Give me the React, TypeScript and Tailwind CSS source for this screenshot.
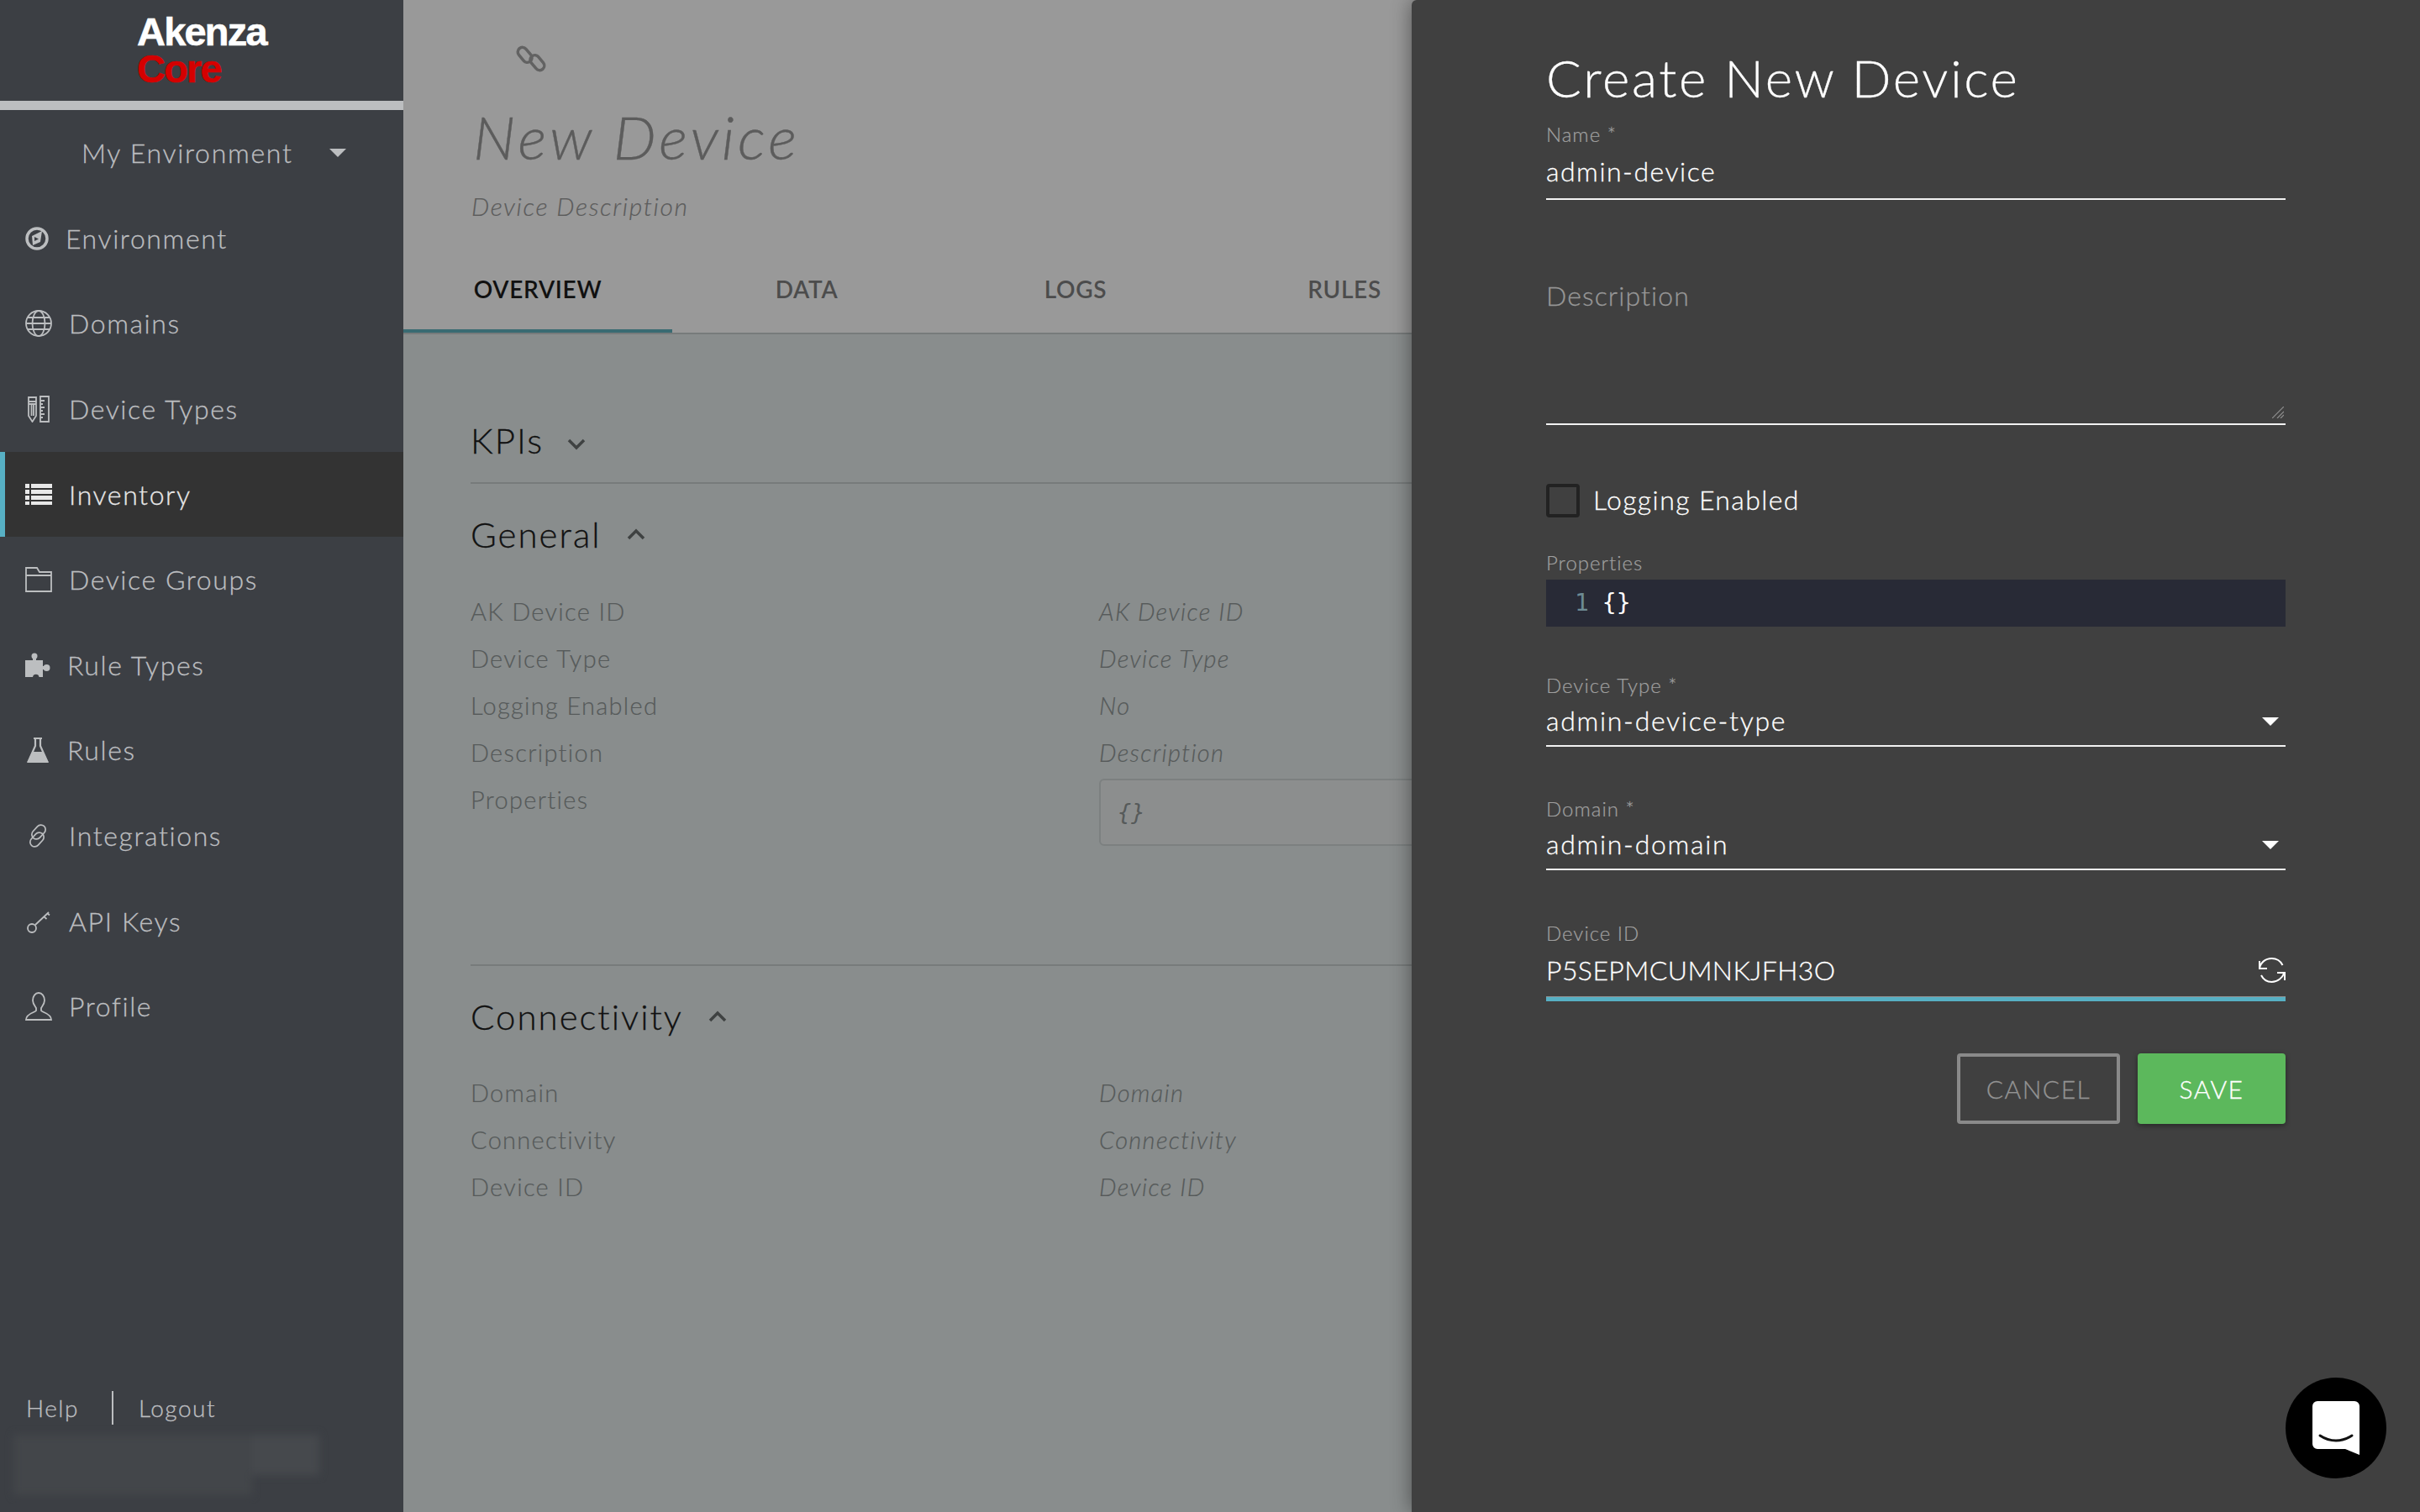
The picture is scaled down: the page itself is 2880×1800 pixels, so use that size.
import React from "react";

const ic = "#bcbec0";

function Env() {
  return (
    <svg width="28" height="28" viewBox="0 0 28 28" fill="none">
      <circle cx="14" cy="14" r="12" stroke={ic} strokeWidth="3.500" />
      <path d="M8 11l12-6-2 13-9 4z" fill={ic} />
      <path d="M11 12l5 2.500-5 2.500z" fill="#3c3f44" />
    </svg>
  );
}
function Globe() {
  return (
    <svg width="32" height="32" viewBox="0 0 32 32" fill="none" stroke={ic} strokeWidth="1.800">
      <circle cx="16" cy="16" r="15" />
      <ellipse cx="16" cy="16" rx="7.500" ry="15" />
      <path d="M3 9h26M1 16h30M3 23h26" />
    </svg>
  );
}
function PencilRuler() {
  return (
    <svg width="28" height="32" viewBox="0 0 28 32" fill="none" stroke={ic} strokeWidth="1.800">
      <path d="M2 2h9v22l-4.500 7L2 24zM2 7h9M2 10h9M5.500 10v14M8 10v14" />
      <path d="M16 1h10v30H16zM16 6h5M16 10h3M16 14h5M16 18h3M16 22h5M16 26h3" />
    </svg>
  );
}
function ListIc() {
  return (
    <svg width="32" height="26" viewBox="0 0 32 26" fill="#e8e8e8">
      <rect x="0" y="0" width="5" height="5" />
      <rect x="7" y="0" width="25" height="5" />
      <rect x="0" y="7" width="5" height="5" />
      <rect x="7" y="7" width="25" height="5" />
      <rect x="0" y="14" width="5" height="5" />
      <rect x="7" y="14" width="25" height="5" />
      <rect x="0" y="21" width="5" height="4" />
      <rect x="7" y="21" width="25" height="4" />
    </svg>
  );
}
function Folder() {
  return (
    <svg width="32" height="30" viewBox="0 0 32 30" fill="none" stroke={ic} strokeWidth="1.800">
      <path d="M1 1h13l3 5h14v23H1zM1 10h30" />
    </svg>
  );
}
function Puzzle() {
  return (
    <svg width="30" height="30" viewBox="0 0 30 30" fill={ic}>
      <circle cx="11" cy="4" r="3.500" />
      <path d="M9 6h4v3h8v20h-4.500a3.800 3.800 0 0 0-7.500 0H0V9h9z" />
      <circle cx="25.500" cy="18" r="4" />
      <rect x="20" y="16" width="4" height="4" />
    </svg>
  );
}
function Flask() {
  return (
    <svg width="26" height="30" viewBox="0 0 26 30">
      <path d="M8 1h10M10 1v9L2 28h22L16 10V1" fill="none" stroke={ic} strokeWidth="2.200" />
      <path d="M6.500 17h13L26 30H0z" fill={ic} />
    </svg>
  );
}
function LinkIc() {
  return (
    <svg width="24" height="32" viewBox="0 0 24 32" fill="none" stroke={ic} strokeWidth="1.700">
      <rect x="3.500" y="6" width="19" height="11" rx="5.500" transform="rotate(-48 13 11.500)" />
      <rect x="1.500" y="15" width="19" height="11" rx="5.500" transform="rotate(-48 11 20.500)" />
    </svg>
  );
}
function Key() {
  return (
    <svg width="28" height="28" viewBox="0 0 28 28" fill="none" stroke={ic} strokeWidth="1.800">
      <circle cx="6" cy="22" r="5" />
      <path d="M10 18L26 3M20 8l3.500 3M24 4l3 2.500" />
    </svg>
  );
}
function User() {
  return (
    <svg width="32" height="34" viewBox="0 0 32 34" fill="none" stroke={ic} strokeWidth="1.800">
      <path d="M9 10c0-5 3-9 7-9s7 4 7 9c0 4-3 7-4 9v3c0 2 12 3 12 11H1c0-8 12-9 12-11v-3c-1-2-4-5-4-9z" />
    </svg>
  );
}
function Sync() {
  return (
    <svg className="absolute right-0 top-[13px]" width="32" height="30" viewBox="0 0 32 30" fill="none" stroke="#fff" strokeWidth="2">
      <path d="M1 13C2 6 8 1 15.500 1 21 1 26 4 28.500 9" />
      <path d="M1 4v9h9" />
      <path d="M3 21c2.500 5 7 8 12.500 8 7 0 13-5 15-11" />
      <path d="M22 18h9v9" />
    </svg>
  );
}

const nav: [string, React.ReactNode, string, boolean?][] = [
  ["Environment", <Env />, "w-[48px]"],
  ["Domains", <Globe />, "w-[52px]"],
  ["Device Types", <PencilRuler />, "w-[52px] pl-[2px]"],
  ["Inventory", <ListIc />, "w-[52px]", true],
  ["Device Groups", <Folder />, "w-[52px]"],
  ["Rule Types", <Puzzle />, "w-[50px]"],
  ["Rules", <Flask />, "w-[50px] pl-[2px]"],
  ["Integrations", <LinkIc />, "w-[52px] pl-[3px]"],
  ["API Keys", <Key />, "w-[52px] pl-[2px]"],
  ["Profile", <User />, "w-[52px]"],
];

function Chevron({ up }: { up?: boolean }) {
  return (
    <svg width="22" height="14" viewBox="0 0 22 14" fill="none" stroke="#3f4242" strokeWidth="3.500">
      <path d={up ? "M2 12l9-9 9 9" : "M2 2l9 9 9-9"} />
    </svg>
  );
}

function Row({ k, v }: { k: string; v?: string }) {
  return (
    <div className="flex h-[56px] items-center text-[29px] font-light tracking-[1.300px] text-[#565a5a] [-webkit-text-stroke:0.2px]">
      <div className="w-[748px]">{k}</div>
      {v && <div className="italic">{v}</div>}
    </div>
  );
}

function Field({ label, value, arrow, cls }: { label: string; value: string; arrow?: boolean; cls: string }) {
  return (
    <div className={cls}>
      <div className="h-[32px] text-[24px] font-light leading-[32px] tracking-[1px] text-[#a0a0a0] [-webkit-text-stroke:0.2px]">{label}</div>
      <div className="relative flex h-[57px] items-center border-b-[2px] border-[#f2f2f2] pb-[3px] text-[32px] font-light tracking-[1.700px] text-white [-webkit-text-stroke:0.3px]">
        {value}
        {arrow && <span className="absolute right-[8px] top-[22px] h-0 w-0 border-x-[10px] border-t-[10px] border-x-transparent border-t-white" />}
      </div>
    </div>
  );
}

export default function App() {
  return (
    <div className="relative flex h-screen w-screen overflow-hidden font-['Lato',sans-serif]">
      <aside className="flex w-[480px] shrink-0 flex-col bg-[#3c3f44] text-[#bcbec0]">
        <div className="flex h-[120px] flex-col pl-[163px] pt-[16px] font-['Liberation_Sans',sans-serif] text-[47px] font-bold leading-[44px] tracking-[-1.800px] [-webkit-text-stroke:0.6px]">
          <span className="text-white">Akenza</span>
          <span className="text-[#d50000]">Core</span>
        </div>
        <div className="h-[11px] bg-[#bcbec0]" />
        <div className="flex h-[102px] items-center pl-[97px] text-[32px] font-light tracking-[1.700px] [-webkit-text-stroke:0.3px]">
          <span className="w-[295px]">My Environment</span>
          <span className="h-0 w-0 border-x-[10px] border-t-[10px] border-x-transparent border-t-[#bcbec0]" />
        </div>
        <nav className="flex flex-col">
          {nav.map(([name, icon, iconBox, active]) => (
            <div key={name} className={`relative flex h-[101.6px] items-center pl-[30px] text-[32px] font-light tracking-[1.600px] [-webkit-text-stroke:0.3px] ${active ? "bg-[#333333] text-[#e8e8e8]" : ""}`}>
              {active && <span className="absolute bottom-0 left-0 top-0 w-[6px] bg-[#57b0c4]" />}
              <span className={`flex items-center ${iconBox}`}>{icon}</span>
              <span>{name}</span>
            </div>
          ))}
        </nav>
        <div className="mt-auto flex items-center pl-[31px] text-[28px] font-light tracking-[1.500px] [-webkit-text-stroke:0.3px]">
          <span>Help</span>
          <span className="ml-[39px] mr-[30px] h-[40px] w-[2px] bg-[#bcbec0]" />
          <span>Logout</span>
        </div>
        <div className="mb-[20px] ml-[16px] mt-[11px] flex h-[72px] w-[364px] items-start blur-[5px]">
          <div className="h-[72px] w-[284px] bg-[#43464a]" />
          <div className="h-[48px] w-[80px] bg-[#46494d]" />
        </div>
      </aside>

      <main className="flex-1 overflow-hidden bg-[#898d8d]">
        <header className="h-[398px] border-b-[2px] border-[#777b7b] bg-[#999999]">
          <div className="h-[108px] pl-[134px] pt-[52px]">
            <svg width="36" height="36" viewBox="0 0 36 36" fill="none" stroke="#626262" strokeWidth="3.500">
              <rect x="1" y="8" width="20" height="11" rx="5.500" transform="rotate(50 11 13)" />
              <rect x="15" y="17" width="20" height="11" rx="5.500" transform="rotate(50 25 23)" />
            </svg>
          </div>
          <div className="pl-[83px] text-[72px] font-light italic leading-[108px] tracking-[4px] text-[#5c5c5c] [-webkit-text-stroke:0.4px]">New Device</div>
          <div className="mt-[2px] pl-[81px] text-[30px] font-light italic leading-[54px] tracking-[1.600px] text-[#5c5c5c] [-webkit-text-stroke:0.2px]">Device Description</div>
          <div className="mt-[24px] flex h-[100px] text-[28px] font-semibold tracking-[0.700px] text-[#4c4c4c]">
            <div className="flex w-[320px] items-center justify-center border-b-[4px] border-[#396b72] text-[#111]">OVERVIEW</div>
            <div className="flex w-[320px] items-center justify-center pb-[4px]">DATA</div>
            <div className="flex w-[320px] items-center justify-center pb-[4px]">LOGS</div>
            <div className="flex w-[320px] items-center justify-center pb-[4px]">RULES</div>
          </div>
        </header>
        <div className="pl-[80px]">
          <section className="flex h-[178px] items-end gap-[28px] border-b-[2px] border-[#777b7b] pb-[18px] text-[42px] font-light tracking-[2px] text-[#111] [-webkit-text-stroke:0.3px]">
            <span>KPIs</span>
            <span className="pb-[20px]"><Chevron /></span>
          </section>
          <section className="h-[574px] border-b-[2px] border-[#777b7b] pt-[29px]">
            <div className="flex h-[62px] items-center gap-[30px] text-[42px] font-light tracking-[2px] text-[#111] [-webkit-text-stroke:0.3px]">General <Chevron up /></div>
            <div className="mt-[33px]">
              <Row k="AK Device ID" v="AK Device ID" />
              <Row k="Device Type" v="Device Type" />
              <Row k="Logging Enabled" v="No" />
              <Row k="Description" v="Description" />
            </div>
            <div className="flex text-[29px] font-light tracking-[1.300px] text-[#565a5a] [-webkit-text-stroke:0.2px]">
              <div className="h-[56px] w-[748px] leading-[56px]">Properties</div>
              <div className="mt-[3px] flex h-[80px] w-[400px] items-center rounded-[6px] border-[2px] border-[#7c8080] bg-[#8c8e8e] pl-[20px] font-['DejaVu_Sans_Mono',monospace] text-[27px] italic tracking-normal [-webkit-text-stroke:0px]">{"{}"}</div>
            </div>
          </section>
          <section className="pt-[29px]">
            <div className="flex h-[62px] items-center gap-[30px] text-[42px] font-light tracking-[2px] text-[#111] [-webkit-text-stroke:0.3px]">Connectivity <Chevron up /></div>
            <div className="mt-[32px]">
              <Row k="Domain" v="Domain" />
              <Row k="Connectivity" v="Connectivity" />
              <Row k="Device ID" v="Device ID" />
            </div>
          </section>
        </div>
      </main>

      <div className="absolute bottom-0 right-0 top-0 w-[1200px] rounded-tl-[6px] bg-[#404040] px-[160px] shadow-[0_0_24px_rgba(0,0,0,0.45)]">
        <h1 className="pt-[54px] text-[62px] font-light leading-[76px] tracking-[2.600px] text-white [-webkit-text-stroke:0.3px]">Create New Device</h1>
        <div className="mt-[14px] h-[32px] text-[24px] font-light leading-[32px] tracking-[1px] text-[#a0a0a0] [-webkit-text-stroke:0.2px]">Name *</div>
        <div className="flex h-[62px] items-center border-b-[2px] border-[#f2f2f2] pb-[5px] text-[32px] font-light tracking-[1.500px] text-white [-webkit-text-stroke:0.3px]">admin-device</div>
        <div className="relative mt-[85px] h-[183px] border-b-[2px] border-[#f2f2f2] pt-[7px] text-[32px] font-light leading-[44px] tracking-[1.100px] text-[#979797] [-webkit-text-stroke:0.3px]">
          Description
          <svg className="absolute bottom-[6px] right-[2px]" width="14" height="14" viewBox="0 0 14 14" stroke="#8f8f8f" strokeWidth="1.200">
            <path d="M0 14L14 0M6 14l8-8M10 14l4-4" />
          </svg>
        </div>
        <div className="mt-[70px] flex h-[40px] items-center gap-[16px] pb-[0px] text-[32px] font-light tracking-[1.400px] text-white [-webkit-text-stroke:0.3px]">
          <span className="h-[40px] w-[40px] rounded-[4px] border-[4px] border-[#222]" />
          <span className="-mt-[2px]">Logging Enabled</span>
        </div>
        <div className="mt-[38px] h-[32px] text-[24px] font-light leading-[32px] tracking-[1px] text-[#a0a0a0] [-webkit-text-stroke:0.2px]">Properties</div>
        <div className="mt-[4px] flex h-[56px] items-center bg-[#282a36] pl-[34px] font-['DejaVu_Sans_Mono',monospace] text-[28px]">
          <span className="text-[#6d8b94]">1</span>
          <span className="ml-[16px] text-white">{"{}"}</span>
        </div>
        <Field cls="mt-[54px]" label="Device Type *" value="admin-device-type" arrow />
        <Field cls="mt-[58px]" label="Domain *" value="admin-domain" arrow />
        <div className="mt-[59px] flex flex-col">
          <div className="h-[32px] text-[24px] font-light leading-[32px] tracking-[1px] text-[#a0a0a0] [-webkit-text-stroke:0.2px]">Device ID</div>
          <div className="relative flex h-[59px] items-center pb-[4px] text-[32px] font-light tracking-[0.400px] text-white [-webkit-text-stroke:0.3px]">
            P5SEPMCUMNKJFH3O
            <Sync />
          </div>
          <div className="h-[6px] border-t-[1px] border-[#8f8f8f] bg-[#57b0c4]" />
        </div>
        <div className="mt-[62px] flex justify-end gap-[21px] text-[30px] font-light tracking-[1.500px] [-webkit-text-stroke:0.3px]">
          <div className="flex h-[84px] w-[194px] items-center justify-center rounded-[4px] border-[4px] border-[#8a8a8a] text-[#939393]">CANCEL</div>
          <div className="flex h-[84px] w-[176px] items-center justify-center rounded-[4px] bg-[#5cb85c] text-white shadow-[0_2px_6px_rgba(0,0,0,0.4)]">SAVE</div>
        </div>
      </div>

      <div className="absolute bottom-[40px] right-[40px] flex h-[120px] w-[120px] items-center justify-center rounded-full bg-black">
        <svg width="56" height="64" viewBox="0 0 56 64">
          <path d="M6 0h44a6 6 0 0 1 6 6v58L39 57H6a6 6 0 0 1-6-6V6a6 6 0 0 1 6-6z" fill="#fff" />
          <path d="M9 41c12 8 26 8 38 0" fill="none" stroke="#111" strokeWidth="3" strokeLinecap="round" />
        </svg>
      </div>
    </div>
  );
}
